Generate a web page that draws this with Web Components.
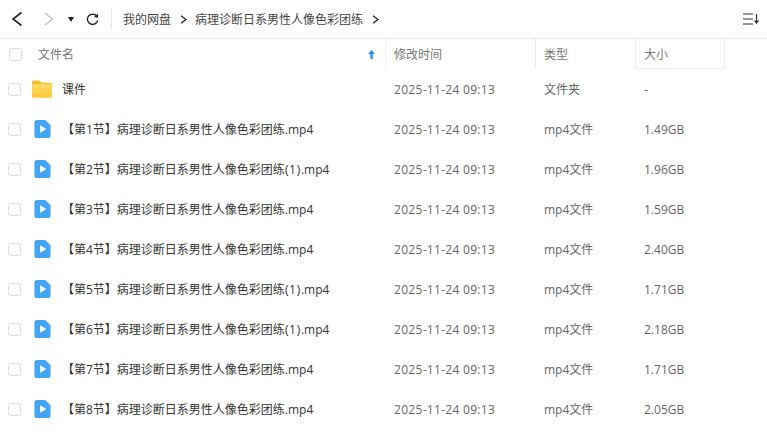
<!DOCTYPE html>
<html lang="zh">
<head>
<meta charset="utf-8">
<style>
  html, body { margin: 0; height: 100%; overflow: hidden; background: #fff; }
  body { font: 12px "Open Sans", "Noto Sans CJK SC", sans-serif; color: #333; }
</style>
</head>
<body>
<file-app></file-app>
<script>
const FONT = `"Open Sans", "Noto Sans CJK SC", sans-serif`;

class PathBar extends HTMLElement {
  constructor() {
    super();
    this.attachShadow({ mode: "open" });
    this.shadowRoot.innerHTML = `
    <style>
      :host { display: flex; align-items: center; height: 38px; border-bottom: 1px solid #ececec; padding-left: 10px; padding-right: 7px; font-family: ${FONT}; color: #444; }
      svg { display: block; flex: none; }
      .back { margin-right: 17px; }
      .forward { margin-right: 13px; }
      .drop { margin-right: 12px; }
      .refresh { margin-right: 12px; }
      .divider { width: 1px; height: 20px; background: #e6e6e6; margin-right: 11px; }
      .crumb { white-space: nowrap; }
      .sep { margin: 0 8px 0 9px; }
      .end { margin-left: auto; }
    </style>
    <svg class="back" width="14" height="16" viewBox="0 0 14 16"><path d="M11.500 1.500 3 8l8.500 6.500" fill="none" stroke="#222" stroke-width="1.6"/></svg>
    <svg class="forward" width="14" height="16" viewBox="0 0 14 16"><path d="M4 2 11.500 8 4 14" fill="none" stroke="#c4c4c4" stroke-width="1.500"/></svg>
    <svg class="drop" width="6" height="5" viewBox="0 0 6 5"><path d="M0 0h6L3 5z" fill="#222"/></svg>
    <svg class="refresh" width="13" height="13" viewBox="0 0 14 14"><path d="M11.500 3.200A5.600 5.600 0 1 0 12.600 8" fill="none" stroke="#222" stroke-width="1.400"/><path d="M8.600 4.200 13 5V.8z" fill="#222"/></svg>
    <span class="divider"></span>
    <span class="crumb">我的网盘</span>
    <svg class="sep" width="7" height="9" viewBox="0 0 7 9"><path d="M1 .8 6 4.500 1 8.200" fill="none" stroke="#222" stroke-width="1.300"/></svg>
    <span class="crumb">病理诊断日系男性人像色彩团练</span>
    <svg class="sep" width="7" height="9" viewBox="0 0 7 9"><path d="M1 .8 6 4.500 1 8.200" fill="none" stroke="#222" stroke-width="1.300"/></svg>
    <svg class="end" width="17" height="12" viewBox="0 0 17 12"><path d="M0 1h10M0 6h10M0 11h10" stroke="#333" stroke-width="1.200"/><path d="M13.500 1v8" stroke="#333" stroke-width="1.200"/><path d="M10.800 7.500h5.400l-2.700 3.700z" fill="#333"/></svg>
    `;
  }
}

class RowCheck extends HTMLElement {
  constructor() {
    super();
    this.attachShadow({ mode: "open" });
    this.shadowRoot.innerHTML = `
    <style>
      :host { display: block; width: 11px; height: 11px; border: 1px solid #dcdcdc; border-radius: 3px; background: #fff; }
    </style>`;
  }
}

class HeaderRow extends HTMLElement {
  constructor() {
    super();
    this.attachShadow({ mode: "open" });
    this.shadowRoot.innerHTML = `
    <style>
      :host { display: grid; grid-template-columns: 385px 150px 100px 90px; height: 30px; color: #777; font-family: ${FONT}; }
      .cell { display: flex; align-items: center; padding-left: 9px; }
      .cell + .cell { border-left: 1px solid #eeeeee; padding-left: 8px; }
      .cell.last { border-right: 1px solid #eeeeee; border-bottom: 1px solid #eeeeee; }
      .name { padding-right: 10px; }
      row-check { margin-right: 16px; }
      .arrow { margin-left: auto; }
    </style>
    <div class="cell name">
      <row-check></row-check>
      <span>文件名</span>
      <svg class="arrow" width="7" height="9" viewBox="0 0 7 9"><path d="M3.500 0 7 4H4.700v5H2.300V4H0z" fill="#1e8ff0"/></svg>
    </div>
    <div class="cell">修改时间</div>
    <div class="cell">类型</div>
    <div class="cell last">大小</div>
    `;
  }
}

class FileRow extends HTMLElement {
  constructor() {
    super();
    this.attachShadow({ mode: "open" });
  }
  connectedCallback() {
    const folder = this.getAttribute("kind") === "folder";
    const icon = folder
      ? `<svg width="20" height="18" viewBox="0 0 21 18"><defs><linearGradient id="f" x1="0" y1="0" x2="0" y2="1"><stop offset="0" stop-color="#ffdc6b"/><stop offset="1" stop-color="#ffc832"/></linearGradient></defs><path d="M0 2.200C0 1 .9 0 2 0h5.200c.7 0 1.200.3 1.600.8L10.200 2.400H19c1.100 0 2 .9 2 2V16c0 1.100-.9 2-2 2H2c-1.100 0-2-.9-2-2z" fill="#fbb92e"/><path d="M0 5.400c0-.9.7-1.600 1.600-1.600h17.800c.9 0 1.600.7 1.600 1.600V16c0 1.100-.9 2-2 2H2c-1.100 0-2-.9-2-2z" fill="url(#f)"/></svg>`
      : `<svg width="17" height="18" viewBox="0 0 17 19"><path d="M2.500 0H11.500L17 5.500V16.500C17 17.900 15.900 19 14.500 19H2.500C1.100 19 0 17.900 0 16.500V2.500C0 1.100 1.100 0 2.500 0Z" fill="#42a5f5"/><path d="M6 5.500 12.500 9.500 6 13.500z" fill="#fff"/></svg>`;
    const label = this.getAttribute("name").replace("(1)", `<span class="paren">(1)</span>`);
    this.shadowRoot.innerHTML = `
    <style>
      :host { display: grid; grid-template-columns: 385px 150px 100px 90px; height: 40px; align-items: center; color: #666; font-family: ${FONT}; }
      .name { display: flex; align-items: center; color: #333; padding-left: 8px; white-space: nowrap; }
      row-check { margin-right: 11px; }
      .icon { width: 20px; display: flex; justify-content: center; margin-right: 10px; }
      .cell { padding-left: 9px; }
      .time { letter-spacing: .3px; }
      .paren { letter-spacing: .7px; }
    </style>
    <div class="name">
      <row-check></row-check>
      <span class="icon">${icon}</span>
      <span>${label}</span>
    </div>
    <div class="cell time">2025-11-24 09:13</div>
    <div class="cell">${this.getAttribute("type")}</div>
    <div class="cell">${this.getAttribute("size")}</div>
    `;
  }
}

class FileApp extends HTMLElement {
  constructor() {
    super();
    this.attachShadow({ mode: "open" });
    const base = "病理诊断日系男性人像色彩团练";
    const rows = [
      ["【第1节】" + base + ".mp4", "1.49GB"],
      ["【第2节】" + base + "(1).mp4", "1.96GB"],
      ["【第3节】" + base + ".mp4", "1.59GB"],
      ["【第4节】" + base + ".mp4", "2.40GB"],
      ["【第5节】" + base + "(1).mp4", "1.71GB"],
      ["【第6节】" + base + "(1).mp4", "2.18GB"],
      ["【第7节】" + base + ".mp4", "1.71GB"],
      ["【第8节】" + base + ".mp4", "2.05GB"],
    ];
    this.shadowRoot.innerHTML = `
    <style>
      :host { display: block; width: 767px; height: 435px; overflow: hidden; }
    </style>
    <path-bar></path-bar>
    <header-row></header-row>
    <file-row kind="folder" name="课件" type="文件夹" size="-"></file-row>
    ${rows.map(([n, s]) => `<file-row kind="video" name="${n}" type="mp4文件" size="${s}"></file-row>`).join("")}
    `;
  }
}

customElements.define("path-bar", PathBar);
customElements.define("row-check", RowCheck);
customElements.define("header-row", HeaderRow);
customElements.define("file-row", FileRow);
customElements.define("file-app", FileApp);
</script>
</body>
</html>
